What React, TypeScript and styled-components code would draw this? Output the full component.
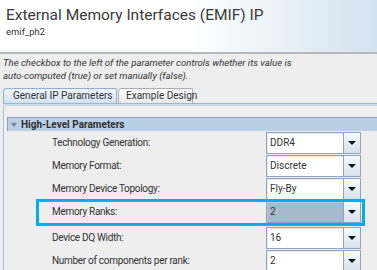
import React from "react";
import styled, { createGlobalStyle, css } from "styled-components";

const Global = createGlobalStyle`
  html, body { margin: 0; padding: 0; background: #eeeeee; overflow: hidden; }
  body { font-family: Roboto, "Liberation Sans", Arial, sans-serif; color: #333; }
  *, *::before, *::after { box-sizing: border-box; }
`;

const Page = styled.div`
  width: 377px;
  height: 270px;
  overflow: hidden;
  display: flex;
  flex-direction: column;
  background: #eeeeee;
`;

const Header = styled.header`
  height: 54px;
  flex: none;
  padding: 5px 0 0 6px;
  background: linear-gradient(to right, #ffffff 0%, #ffffff 50%, #d3e2f0 100%);
  border-bottom: 2px solid #b4b8bc;
  display: flex;
  flex-direction: column;
`;

const Title = styled.h1`
  margin: 0;
  font-size: 15.5px;
  font-weight: 400;
  line-height: 21px;
  color: #3a3a3a;
`;

const Subtitle = styled.div`
  font-size: 9.5px;
  line-height: 12px;
  color: #333;
`;

const Description = styled.p`
  margin: 0;
  padding: 2px 0 0 3px;
  font-size: 9.6px;
  line-height: 13px;
  font-style: italic;
  color: #333;
`;

const TabStrip = styled.div`
  margin-top: 6px;
  padding-left: 3px;
  display: flex;
  align-items: flex-end;
  height: 15px;
  flex: none;
`;

const Tab = styled.div<{ $active?: boolean }>`
  height: 15px;
  margin-right: 1px;
  padding: 0 0 0 9px;
  font-size: 10px;
  line-height: 14px;
  color: #333;
  border: 1px solid #a8b8cc;
  border-bottom: none;
  border-radius: 4px 2px 0 0;
  white-space: nowrap;
  ${(p) =>
    p.$active
      ? css`
          width: 114px;
          background: linear-gradient(#eef4fb, #d3e2f2);
          border-color: #97aecb;
        `
      : css`
          width: 75px;
          padding-left: 7px;
          background: linear-gradient(#ffffff, #e9e9e9);
          border-color: #a9adb3;
        `}
`;

const TabRule = styled.div`
  height: 3px;
  flex: none;
  margin-left: 3px;
  border-top: 1px solid #9fb6d3;
  background: #c9daee;
`;

const PanelBody = styled.section`
  flex: 1;
  margin-left: 3px;
  border-left: 1px solid #a9bed8;
  padding: 11px 0 0 3px;
  display: flex;
  flex-direction: column;
`;

const GroupHeader = styled.div`
  height: 14px;
  flex: none;
  background: #b9cfe6;
  border-top: 1px solid #8c9fb6;
  border-left: 1px solid #8c9fb6;
  display: flex;
  align-items: center;
  padding-left: 3px;
  gap: 4px;
  font-size: 10px;
  font-weight: 700;
  color: #2f2f2f;
`;

const Caret = styled.span`
  width: 0;
  height: 0;
  border-left: 3.5px solid transparent;
  border-right: 3.5px solid transparent;
  border-top: 4px solid #7d8590;
`;

const Rows = styled.div`
  display: flex;
  flex-direction: column;
`;

const Row = styled.div<{ $highlight?: boolean }>`
  position: relative;
  height: ${(p) => (p.$highlight ? 26 : 23)}px;
  display: flex;
  align-items: flex-start;
  padding-top: 1px;
  padding-left: 45px;
  ${(p) =>
    p.$highlight &&
    css`
      &::after {
        content: "";
        position: absolute;
        left: 29px;
        top: -1px;
        width: 329px;
        height: 27px;
        border: 3px solid #00aeef;
        pointer-events: none;
      }
    `}
`;

const Label = styled.span`
  width: 214px;
  height: 22px;
  line-height: 22px;
  font-size: 10px;
  letter-spacing: -0.3px;
  color: #333;
  white-space: nowrap;
`;

const Combo = styled.div`
  width: 95px;
  height: 22px;
  display: flex;
`;

const Field = styled.div<{ $selected?: boolean }>`
  flex: 1;
  border: 1px solid #8ea3bc;
  background: ${(p) => (p.$selected ? "#a6b9cd" : "#ffffff")};
  box-shadow: inset 1px 1px 0 ${(p) => (p.$selected ? "#b9c9da" : "#e6ebf1")};
  font-size: 10px;
  line-height: 20px;
  padding-left: 3px;
  color: #333;
  white-space: nowrap;
  overflow: hidden;
`;

const ArrowButton = styled.div`
  width: 17px;
  flex: none;
  border: 1px solid #8ea3bc;
  border-left: none;
  background: linear-gradient(#f7f9fc, #d6e1ed);
  display: flex;
  align-items: center;
  justify-content: center;
  &::before {
    content: "";
    width: 0;
    height: 0;
    border-left: 4px solid transparent;
    border-right: 4px solid transparent;
    border-top: 4px solid #111;
  }
`;

const params = [
  { label: "Technology Generation:", value: "DDR4" },
  { label: "Memory Format:", value: "Discrete" },
  { label: "Memory Device Topology:", value: "Fly-By" },
  { label: "Memory Ranks:", value: "2", highlight: true },
  { label: "Device DQ Width:", value: "16" },
  { label: "Number of components per rank:", value: "2" },
];

export default function App() {
  return (
    <Page>
      <Global />
      <Header>
        <Title>External Memory Interfaces (EMIF) IP</Title>
        <Subtitle>emif_ph2</Subtitle>
      </Header>
      <Description>
        The checkbox to the left of the parameter controls whether its value is
        <br />
        auto-computed (true) or set manually (false).
      </Description>
      <TabStrip>
        <Tab $active>General IP Parameters</Tab>
        <Tab>Example Design</Tab>
      </TabStrip>
      <TabRule />
      <PanelBody>
        <GroupHeader>
          <Caret />
          High-Level Parameters
        </GroupHeader>
        <Rows>
          {params.map((p) => (
            <Row key={p.label} $highlight={p.highlight}>
              <Label>{p.label}</Label>
              <Combo>
                <Field $selected={p.highlight}>{p.value}</Field>
                <ArrowButton />
              </Combo>
            </Row>
          ))}
        </Rows>
      </PanelBody>
    </Page>
  );
}
